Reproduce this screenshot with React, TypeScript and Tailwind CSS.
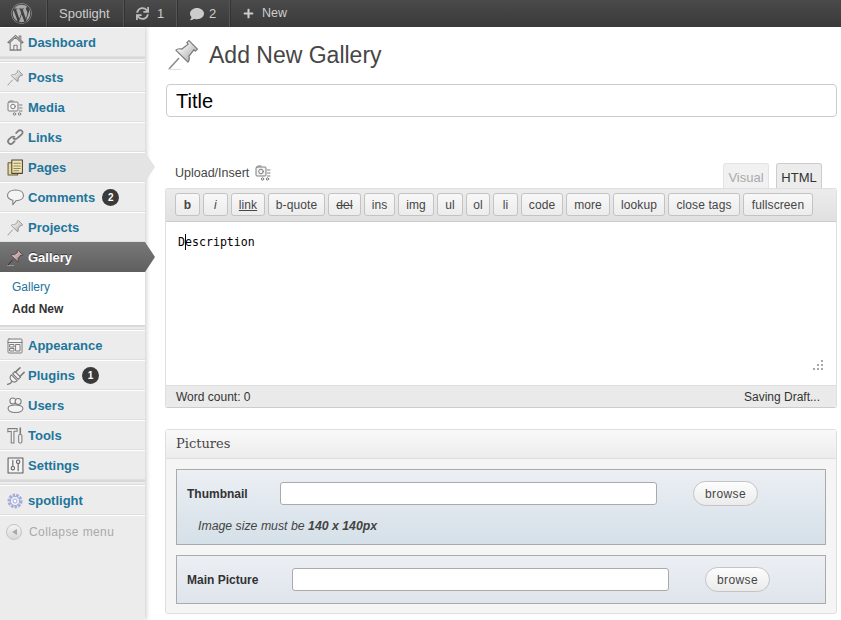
// wp admin "add new gallery" screen

import type { ReactNode } from 'react';
import { FaWordpress, FaSync, FaComment, FaPlus } from 'react-icons/fa';

const sans = { fontFamily: '"Liberation Sans", Arial, sans-serif' };

const Svg = ({ children, size = 17 }: { children: ReactNode; size?: number }) => (
  <svg
    width={size}
    height={size}
    viewBox="0 0 16 16"
    fill="#f4f4f4"
    stroke="#7d7d7d"
    strokeWidth="1"
    strokeLinejoin="round"
    strokeLinecap="round"
    className="shrink-0"
  >
    {children}
  </svg>
);

// thumbtack leaning to the upper right
const Pin = ({ size = 16, tint = false }: { size?: number; tint?: boolean }) => (
  <svg width={size} height={size} viewBox="0 0 30 30" className="shrink-0">
    <defs>
      <linearGradient id={tint ? 'pin-tint' : 'pin-plain'} x1="0" y1="0" x2="1" y2="0">
        <stop offset="0" stopColor={tint ? '#e8c8c8' : '#f8f8f8'} />
        <stop offset="1" stopColor={tint ? '#a88888' : '#b5b5b5'} />
      </linearGradient>
    </defs>
    <path d="M1 29 L11 18" stroke={tint ? '#222' : '#8d8d8d'} strokeWidth="1.6" />
    <path d="M0 29.4 H13" stroke="#dedede" strokeWidth="1" />
    <g
      transform="rotate(45 16 14)"
      fill={`url(#${tint ? 'pin-tint' : 'pin-plain'})`}
      stroke={tint ? '#2c2c2c' : '#777'}
      strokeWidth="1.2"
      strokeLinejoin="round"
    >
      <path d="M10 1 H22 V4 H20 L21 12 C23.5 13.5 24.5 15 24.5 17 H7.5 C7.5 15 8.5 13.5 11 12 L12 4 H10 Z" />
    </g>
  </svg>
);

const HomeIcon = () => (
  <Svg>
    <path d="M0.8 8 L8 1.2 L15.2 8 L14 8.6 L8 3.2 L2 8.6 Z" />
    <path d="M11.5 3.8 V1.8 H13 V5.2" />
    <path d="M3 8 V15 H13 V8" fill="none" />
    <path d="M6.5 15 V10.5 H9.5 V15 M3 15 H13" />
  </Svg>
);
const MediaIcon = () => (
  <Svg size={16}>
    <rect x="1" y="2" width="10" height="9" rx="1" />
    <circle cx="6" cy="6.5" r="2.3" />
    <path d="M3 1 H6 M12.5 5 H15 M12.5 8 H15 M12.5 11 H15" />
    <circle cx="7.5" cy="14" r="1.2" />
    <circle cx="12.5" cy="14" r="1.2" />
  </Svg>
);
const LinkIcon = () => (
  <Svg>
    <path d="M7 7.5 C5.5 6.5 4.5 7 3 8.5 L1.8 9.7 C0.6 11 0.8 12.4 1.7 13.3 C2.7 14.3 4.2 14.4 5.4 13.2 L7.2 11.4" fill="none" strokeWidth="1.6" />
    <path d="M6 9 C7.5 10 9 9.5 10.5 8 L13.8 5 C15 3.7 15 2.6 14 1.7 C13 0.8 11.6 0.8 10.4 2 L8.6 3.8" fill="none" strokeWidth="1.6" />
  </Svg>
);
const PagesIcon = () => (
  <Svg>
    <rect x="1" y="3.5" width="9" height="11.5" fill="#e6d9a5" stroke="#6b5f35" />
    <rect x="4.5" y="1" width="10" height="12.5" fill="#f2e6b4" stroke="#4c4530" />
    <path d="M6.5 4 H12.5 M6.5 6.5 H12.5 M6.5 9 H12.5 M6.5 11 H11" stroke="#8f8560" />
  </Svg>
);
const CommentIcon = () => (
  <Svg>
    <path d="M8 1 C12.2 1 15.5 3 15.5 6.2 C15.5 9.4 12.2 11 8.5 11 L5.5 14.8 L5.5 10.6 C2.8 10 0.5 8.6 0.5 6.2 C0.5 3 3.8 1 8 1 Z" />
  </Svg>
);
const AppearanceIcon = () => (
  <Svg size={16}>
    <rect x="1" y="1" width="14" height="14" rx="1" />
    <path d="M1 4.5 H15" />
    <rect x="3" y="6.5" width="4" height="2.5" fill="none" />
    <rect x="3" y="10.5" width="4" height="2.5" fill="none" />
    <rect x="9" y="6.5" width="4" height="6.5" fill="none" />
  </Svg>
);
const PluginIcon = () => (
  <Svg size={18}>
    <path d="M0.5 15.5 L3 14.5 L5 12" strokeWidth="1.2" fill="none" />
    <path d="M3.8 7 L9 12.2 C7.5 13.7 5.5 13.6 4.2 12.3 C2.8 10.9 2.4 8.6 3.8 7 Z" />
    <path d="M5 6 L10 11 L12 9 L7.2 4 Z" />
    <path d="M7.5 4.5 L11.5 0.8 M11.5 8.5 L15.2 4.8" strokeWidth="1.4" />
  </Svg>
);
const UsersIcon = () => (
  <Svg>
    <circle cx="5.5" cy="3.8" r="2.8" />
    <circle cx="10.5" cy="4.2" r="2.8" />
    <path d="M1 10.5 C1 8.5 4 7.5 8 7.5 C11 7.5 15 8.5 15 10.5 C15 13.5 12 14.5 8 14.5 C4 14.5 1 13 1 10.5 Z" />
  </Svg>
);
const ToolsIcon = () => (
  <Svg>
    <path d="M0.8 1.5 H9.5 V4 H6.5 V15 H4 V4 C3 4 2 4 0.8 4.6 Z" />
    <path d="M12.5 1 V6" strokeWidth="1.5" />
    <rect x="11" y="7" width="3" height="8" rx="1.2" />
  </Svg>
);
const SettingsIcon = () => (
  <Svg>
    <rect x="1" y="1" width="14" height="14" fill="#f4f4f4" stroke="#5f5f5f" />
    <path d="M5.5 3 V8 M10.5 6 V13" stroke="#5f5f5f" />
    <circle cx="5.5" cy="10.5" r="1.6" fill="none" stroke="#5f5f5f" />
    <circle cx="10.5" cy="4.5" r="1.6" fill="none" stroke="#5f5f5f" />
  </Svg>
);
const GearIcon = () => (
  <svg width="16" height="16" viewBox="0 0 16 16" className="shrink-0">
    <circle cx="8" cy="8" r="6" fill="#dfe3f3" stroke="#a3add6" strokeWidth="3" strokeDasharray="2.4 1.2" />
    <circle cx="8" cy="8" r="4.6" fill="#eef0f9" stroke="#a3add6" />
    <circle cx="8" cy="8" r="2" fill="#fff" stroke="#a3add6" />
  </svg>
);

const Badge = ({ n }: { n: number }) => (
  <span className="ml-[7px] flex h-[17px] w-[17px] items-center justify-center rounded-full bg-[#3a3a3a] text-[10px] font-bold text-white">
    {n}
  </span>
);

// plain sidebar row
const MenuRow = ({ icon, label, badge }: { icon: ReactNode; label: string; badge?: number }) => (
  <div className="flex h-[30px] items-center border-t border-t-white border-b border-b-[#dfdfdf] pt-[1px] pl-[7px] text-[13px] font-bold text-[#21759b]">
    <span className="mr-[1px] flex w-[20px] items-center">{icon}</span>
    {label}
    {badge !== undefined && <Badge n={badge} />}
  </div>
);

const Divider = () => (
  <div className="h-[5px] border-t-2 border-t-[#d9d9d9] border-b border-b-[#dcdcdc] bg-[#ececec]" />
);

const Sidebar = () => (
  <aside className="relative z-10 w-[145px] shrink-0 bg-[#ececec] shadow-[1px_0_5px_rgba(0,0,0,0.22)]">
    <MenuRow icon={<HomeIcon />} label="Dashboard" />
    <Divider />
    <MenuRow icon={<Pin />} label="Posts" />
    <MenuRow icon={<MediaIcon />} label="Media" />
    <MenuRow icon={<LinkIcon />} label="Links" />
    <div className="relative bg-[#e4e4e4]">
      <MenuRow icon={<PagesIcon />} label="Pages" />
      <div className="absolute top-0 left-[145px] h-[30px] w-[10px] bg-[#e4e4e4] [clip-path:polygon(0_0,100%_50%,0_100%)]" />
    </div>
    <MenuRow icon={<CommentIcon />} label="Comments" badge={2} />
    <MenuRow icon={<Pin />} label="Projects" />

    {/* current section */}
    <div className="relative flex h-[30px] items-center bg-gradient-to-b from-[#787878] to-[#5f5f5f] pt-[1px] pl-[7px] text-[13px] font-bold text-white [text-shadow:0_-1px_0_#3a3a3a]">
      <span className="mr-[1px] flex w-[20px] items-center">
        <Pin tint />
      </span>
      Gallery
      <div className="absolute top-0 left-[145px] h-[30px] w-[10px] bg-gradient-to-b from-[#787878] to-[#5f5f5f] [clip-path:polygon(0_0,100%_50%,0_100%)]" />
    </div>
    <div className="flex h-[53px] flex-col bg-white pt-[4px] pl-[12px] text-[12px] leading-[22px]">
      <span className="text-[#21759b]">Gallery</span>
      <span className="font-bold text-[#333333]">Add New</span>
    </div>
    <Divider />

    <MenuRow icon={<AppearanceIcon />} label="Appearance" />
    <MenuRow icon={<PluginIcon />} label="Plugins" badge={1} />
    <MenuRow icon={<UsersIcon />} label="Users" />
    <MenuRow icon={<ToolsIcon />} label="Tools" />
    <MenuRow icon={<SettingsIcon />} label="Settings" />
    <Divider />
    <MenuRow icon={<GearIcon />} label="spotlight" />

    <div className="flex h-[32px] items-center border-t border-t-white pl-[6px] text-[12px] tracking-[0.4px] text-[#aaaaaa]">
      <span className="mr-[7px] flex h-[16px] w-[16px] items-center justify-center rounded-full border border-[#c4c4c4] bg-gradient-to-b from-[#f4f4f4] to-[#d8d8d8]">
        <span className="h-0 w-0 border-y-[3px] border-r-[5px] border-y-transparent border-r-[#a8a8a8]" />
      </span>
      Collapse menu
    </div>
  </aside>
);

const topItem = 'flex h-full items-center border-r border-r-[#555555] shadow-[1px_0_0_#333333]';

const TopBar = () => (
  <header className="flex h-[27px] shrink-0 bg-gradient-to-b from-[#4a4a4a] to-[#3a3a3a] text-[13px] text-[#cccccc]">
    <div className={`${topItem} w-[47px] justify-center pr-[3px]`}>
      <FaWordpress size={21} className="text-[#a8a8a8]" />
    </div>
    <div className={`${topItem} w-[77px] pl-[12px]`}>Spotlight</div>
    <div className={`${topItem} w-[53px] pl-[12px]`}>
      <FaSync size={13} className="mr-[8px] text-[#bbbbbb]" />1
    </div>
    <div className={`${topItem} w-[53px] pl-[13px]`}>
      <FaComment size={14} className="mr-[5px] text-[#cccccc]" />2
    </div>
    <div className="flex h-full items-center pl-[13px]">
      <FaPlus size={11} className="mr-[8px] text-[#cccccc]" />
      <span className="text-[12.5px]">New</span>
    </div>
  </header>
);

const quicktags: { label: string; w: string; extra?: string }[] = [
  { label: 'b', w: 'w-[25px]', extra: 'font-bold' },
  { label: 'i', w: 'w-[25px]', extra: 'italic' },
  { label: 'link', w: 'w-[34px]', extra: 'underline' },
  { label: 'b-quote', w: 'w-[57px]' },
  { label: 'del', w: 'w-[33px]', extra: 'line-through' },
  { label: 'ins', w: 'w-[31px]' },
  { label: 'img', w: 'w-[36px]' },
  { label: 'ul', w: 'w-[26px]' },
  { label: 'ol', w: 'w-[24px]' },
  { label: 'li', w: 'w-[25px]' },
  { label: 'code', w: 'w-[42px]' },
  { label: 'more', w: 'w-[44px]' },
  { label: 'lookup', w: 'w-[52px]' },
  { label: 'close tags', w: 'w-[72px]' },
  { label: 'fullscreen', w: 'w-[70px]' },
];

const Editor = () => (
  <div className="-ml-[1px] flex h-[220px] flex-col rounded-[3px] border border-[#dfdfdf] border-b-[#cccccc]">
    <div className="flex h-[33px] shrink-0 gap-[3px] border-b border-b-[#cccccc] bg-gradient-to-b from-[#ececec] to-[#e0e0e0] pt-[4px] pl-[9px]">
      {quicktags.map((tag) => (
        <span
          key={tag.label}
          className={`flex h-[23px] items-center justify-center rounded-[3px] border border-[#c3c3c3] bg-gradient-to-b from-[#f8f8f8] to-[#ececec] text-[12px] tracking-[0.1px] text-[#464646] ${tag.w} ${tag.extra ?? ''}`}
        >
          {tag.label}
        </span>
      ))}
    </div>
    <div className="relative flex-1 bg-white pt-[12px] pl-[12px] text-[12px] leading-[16px] text-black">
      <span style={{ fontFamily: '"DejaVu Sans Mono", monospace' }} className="text-[11.6px]">
        D<span className="relative">
          <span className="absolute top-[-1px] left-0 h-[16px] w-[1px] bg-black" />
          escription
        </span>
      </span>
      <svg width="12" height="12" viewBox="0 0 12 12" className="absolute right-[12px] bottom-[14px]" fill="#a8a8a8">
        <rect x="9" y="1" width="2" height="2" />
        <rect x="5" y="5" width="2" height="2" />
        <rect x="9" y="5" width="2" height="2" />
        <rect x="1" y="9" width="2" height="2" />
        <rect x="5" y="9" width="2" height="2" />
        <rect x="9" y="9" width="2" height="2" />
      </svg>
    </div>
    <div className="flex h-[22px] shrink-0 items-center justify-between rounded-b-[3px] border-t border-t-[#dfdfdf] bg-[#eaeaea] pr-[16px] pl-[10px] text-[12px] text-[#333333]">
      <span>Word count: 0</span>
      <span>Saving Draft...</span>
    </div>
  </div>
);

const FileRow = ({ label, labelW, children, box }: { label: string; labelW: string; children?: ReactNode; box: string }) => (
  <div className={`border border-[#aaaaaa] bg-gradient-to-b from-[#eceff4] ${box}`}>
    <div className="flex items-center pt-[11px] pl-[10px]">
      <span className={`${labelW} shrink-0 text-[12px] font-bold text-[#333333]`}>{label}</span>
      <span className="h-[23px] w-[377px] shrink-0 rounded-[3px] border border-[#aaaaaa] bg-white" />
      <span className="ml-[36px] flex h-[25px] w-[65px] items-center justify-center rounded-full border border-[#c4c4c4] bg-gradient-to-b from-[#fdfdfd] to-[#ebebeb] text-[12px] tracking-[0.4px] text-[#464646]">
        browse
      </span>
    </div>
    {children}
  </div>
);

const PicturesBox = () => (
  <div className="-ml-[1px] mt-[21px] h-[185px] rounded-[3px] border border-[#dfdfdf] bg-[#f5f5f5]">
    <div
      style={{ fontFamily: '"DejaVu Serif", serif' }}
      className="flex h-[29px] items-center border-b border-b-[#dfdfdf] bg-gradient-to-b from-[#f9f9f9] to-[#ececec] pl-[10px] text-[13px] text-[#464646]"
    >
      Pictures
    </div>
    <div className="flex flex-col gap-[10px] px-[10px] pt-[10px]">
      <FileRow label="Thumbnail" labelW="w-[93px]" box="h-[76px] to-[#d5e0e8]">
        <p className="mt-[11px] pl-[21px] text-[12.3px] text-[#444444] italic">
          Image size must be <b>140 x 140px</b>
        </p>
      </FileRow>
      <FileRow label="Main Picture" labelW="w-[105px]" box="h-[49px] to-[#dfe5ec]" />
    </div>
  </div>
);

export default function App() {
  return (
    <div style={sans} className="flex h-[620px] w-[841px] flex-col overflow-hidden bg-white">
      <TopBar />
      <div className="flex min-h-0 flex-1">
        <Sidebar />
        <main className="min-w-0 flex-1 pr-[4px] pl-[21px]">
          {/* page heading */}
          <div className="flex h-[57px] items-start pt-[13px]">
            <span className="mr-[11px] ml-[2px]">
              <Pin size={30} />
            </span>
            <h1 className="text-[23px] leading-[30px] text-[#464646]">Add New Gallery</h1>
          </div>

          <div className="flex h-[33px] items-center rounded-[4px] border border-[#cccccc] pl-[9px] text-[20px] text-black">
            Title
          </div>

          {/* editor tabs row */}
          <div className="mt-[46px] flex h-[25px] items-end justify-between pr-[15px]">
            <div className="flex h-full items-center gap-[6px] pb-[5px] pl-[9px] text-[12.5px] text-[#464646]">
              Upload/Insert
              <MediaIcon />
            </div>
            <div className="flex items-end gap-[7px] text-[13px]">
              <span className="flex h-[25px] w-[46px] items-center justify-center rounded-t-[3px] border border-b-0 border-[#e3e3e3] bg-[#f1f1f1] pt-[3px] text-[#aaaaaa]">
                Visual
              </span>
              <span className="flex h-[25px] w-[46px] items-center justify-center rounded-t-[3px] border border-b-0 border-[#cccccc] bg-[#ececec] pt-[3px] text-[#333333]">
                HTML
              </span>
            </div>
          </div>

          <Editor />
          <PicturesBox />
        </main>
      </div>
    </div>
  );
}
